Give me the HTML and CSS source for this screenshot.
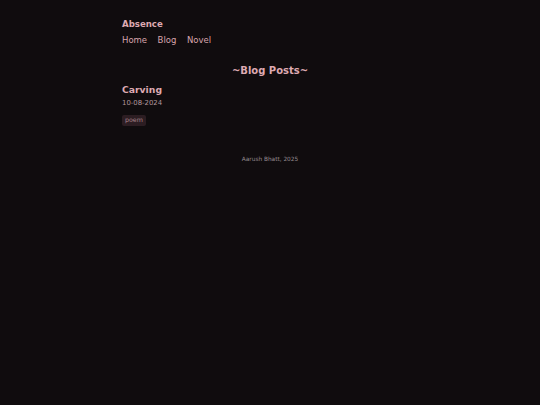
FILE: index.html
```html
<!DOCTYPE html>
<html>
<head>
<meta charset="utf-8">
<link rel="stylesheet" href="styles.css">
</head>
<body>
<div class="page">
  <header class="site-header">
    <div class="site-title">Absence</div>
    <nav class="nav">
      <a href="#">Home</a>
      <a href="#">Blog</a>
      <a href="#">Novel</a>
    </nav>
  </header>
  <main>
    <h1 class="section-title">~Blog Posts~</h1>
    <article class="post">
      <h2 class="post-title">Carving</h2>
      <div class="post-date">10-08-2024</div>
      <div class="tags"><span class="tag">poem</span></div>
    </article>
  </main>
  <footer class="footer">Aarush Bhatt, 2025</footer>
</div>
</body>
</html>
```
FILE: styles.css
```css
html, body {
  margin: 0;
  padding: 0;
  background: #100c0e;
  height: 100%;
}
body {
  font-family: "DejaVu Sans", Verdana, sans-serif;
  color: #d8a5ad;
}
.page {
  width: 296px;
  margin: 0 auto;
  padding-top: 19px;
}
.site-title {
  font-weight: bold;
  font-size: 8.6px;
  line-height: 11px;
  color: #deaab2;
}
.nav {
  display: flex;
  gap: 10.5px;
  margin-top: 5px;
  font-size: 8.5px;
  line-height: 11px;
}
.nav a {
  color: #d8a5ad;
  text-decoration: none;
}
.section-title {
  margin: 18px 0 0;
  text-align: center;
  font-size: 10px;
  line-height: 13px;
  color: #deaab2;
}
.post-title {
  margin: 7px 0 0;
  font-size: 9.25px;
  line-height: 12px;
  color: #deaab2;
}
.post-date {
  margin-top: 3px;
  font-size: 6.9px;
  line-height: 9px;
  color: #b0969b;
}
.tags {
  margin-top: 7px;
  display: flex;
}
.tag {
  background: #2c1d22;
  color: #a8848c;
  font-size: 6.3px;
  line-height: 8.7px;
  padding: 1px 3px;
  border-radius: 2px;
}
.footer {
  margin-top: 29px;
  text-align: center;
  font-size: 5.8px;
  line-height: 8px;
  color: #958b8e;
}
```
